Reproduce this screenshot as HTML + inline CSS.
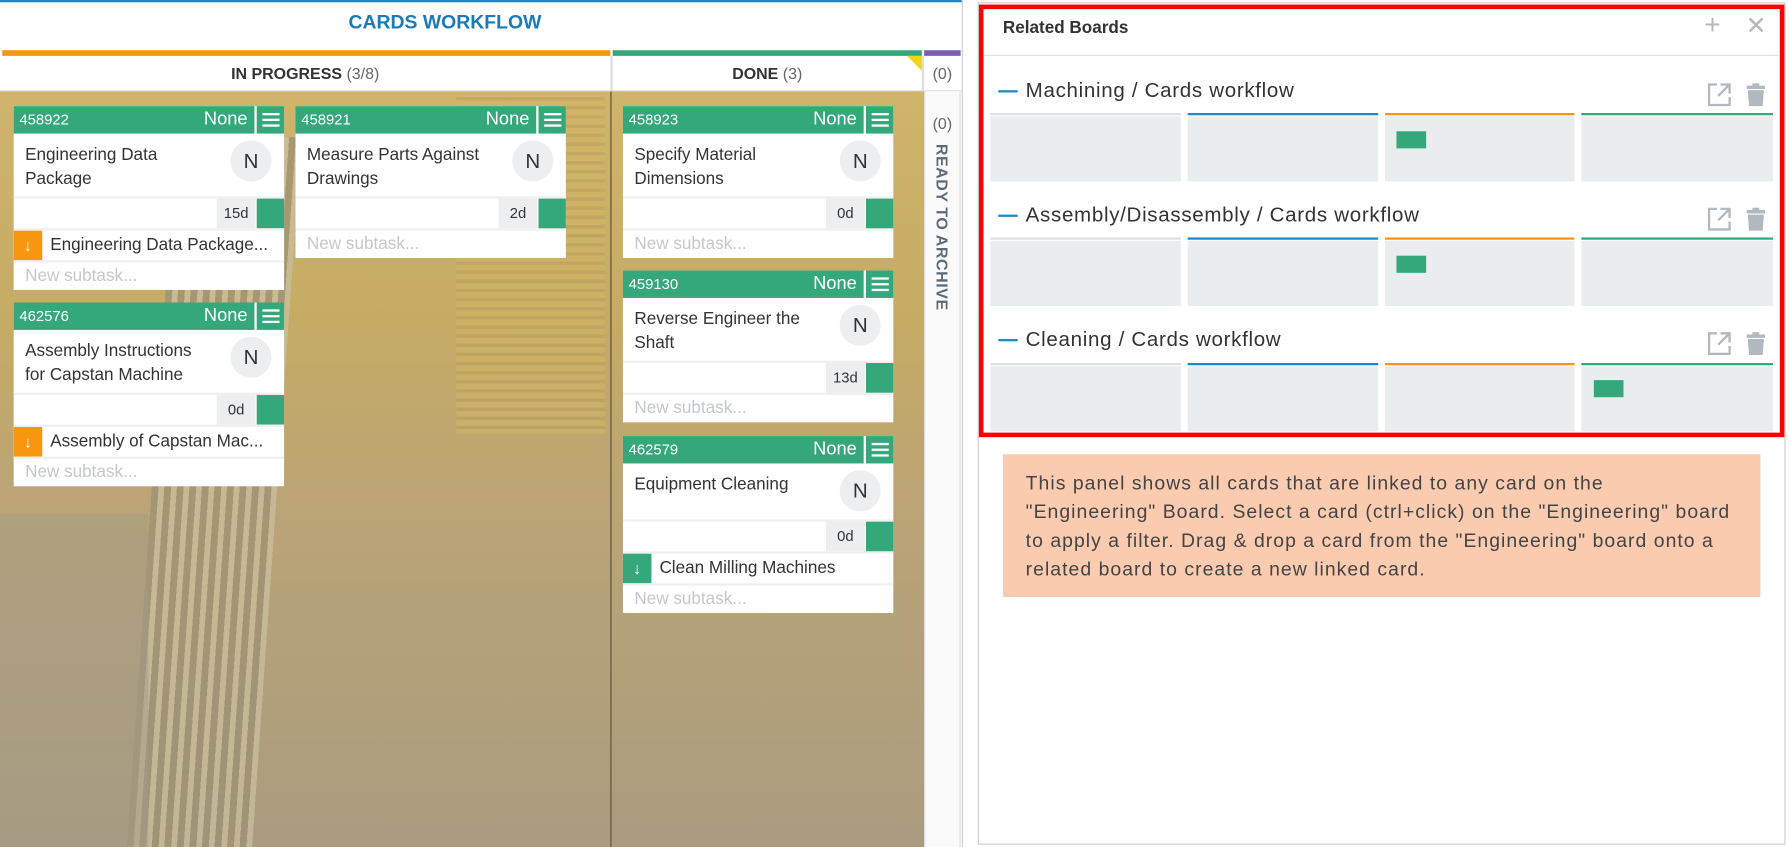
<!DOCTYPE html>
<html><head><meta charset="utf-8">
<style>
*{box-sizing:border-box;margin:0;padding:0}
html,body{width:1789px;height:847px;overflow:hidden;background:#fff;font-family:"Liberation Sans",sans-serif}
#w{position:absolute;left:0;top:0;width:1568px;height:742px;overflow:hidden;transform:scale(1.1409,1.1415);transform-origin:0 0}
.a{position:absolute}
.bg{left:0;top:80px;width:810px;height:662px;overflow:hidden;background:linear-gradient(180deg,#d0b46c 0%,#c6ab64 30%,#bba476 55%,#aa9c80 100%)}
.card{position:absolute;width:237px;background:#fff;font-size:15px;color:#333}
.hd{height:24px;background:#34a87a;color:#fff;position:relative}
.hd .id{position:absolute;left:5px;top:4px;font-size:13px}
.hd .no{position:absolute;right:32px;top:3px;font-size:16px}
.hd .mn{position:absolute;right:0;top:0;width:26px;height:24px;border-left:2px solid #fff}
.hd .mn i{position:absolute;left:5px;width:15px;height:2px;background:#fff}
.bd{position:relative;height:55px;padding:8px 60px 0 10px;line-height:21px}
.av{position:absolute;right:11px;top:6px;width:36px;height:36px;border-radius:50%;background:#eceef0;text-align:center;line-height:36px;font-size:18px;color:#333}
.ft{position:relative;height:28px;border-top:2px solid #f0f0f0}
.ft .d{position:absolute;right:25px;top:0;height:26px;width:34px;background:#eceef0;font-size:13px;text-align:center;line-height:26px}
.ft .g{position:absolute;right:0;top:0;width:24px;height:26px;background:#34a87a}
.sub{position:relative;height:28px;border-top:2px solid #f0f0f0;padding-left:32px;line-height:26px;white-space:nowrap;overflow:hidden}
.sub .ar{position:absolute;left:0;top:0;width:25px;height:26px;color:#fff;text-align:center;font-size:14px}
.ns{height:26px;border-top:2px solid #f0f0f0;padding-left:10px;line-height:24px;color:#c4c8cc}
.cell{position:absolute;height:57px;background:#e9edf0}
.top{position:absolute;height:2px}
.bt{position:absolute;left:875px;font-size:18px;color:#333;letter-spacing:.6px}
.bt b{display:inline-block;width:17px;height:2px;background:#1e88c8;vertical-align:middle;margin-right:7px;font-weight:normal}
</style></head><body><div id="w">
<div class="a" style="left:0;top:0;width:843px;height:2px;background:#1e88c8"></div>
<div class="a" style="left:0;top:10px;width:780px;text-align:center;font-size:17px;color:#1a7bb9;font-weight:bold">CARDS WORKFLOW</div>
<div class="a" style="left:2px;top:44px;width:533px;height:5px;background:#f7960f"></div>
<div class="a" style="left:537px;top:44px;width:271px;height:5px;background:#34a87a"></div>
<div class="a" style="left:810px;top:44px;width:32px;height:5px;background:#7b5fb3"></div>
<div class="a" style="left:0;top:49px;width:843px;height:31px;border-bottom:1px solid #ddd;background:#fff"></div>
<div class="a" style="left:0;top:56px;width:535px;text-align:center;font-size:14px;font-weight:bold;color:#333">IN PROGRESS <span style="font-weight:normal;color:#666">(3/8)</span></div>
<div class="a" style="left:537px;top:56px;width:271px;text-align:center;font-size:14px;font-weight:bold;color:#333">DONE <span style="font-weight:normal;color:#666">(3)</span></div>
<div class="a" style="left:795px;top:49px;width:0;height:0;border-top:13px solid #f3d21b;border-left:13px solid transparent"></div>
<div class="a" style="left:810px;top:56px;width:32px;text-align:center;font-size:14px;color:#666">(0)</div>
<div class="a" style="left:535px;top:49px;width:2px;height:31px;background:#ddd"></div>
<div class="a" style="left:808px;top:49px;width:2px;height:31px;background:#ddd"></div>
<div class="a bg">
 <div class="a" style="left:130px;top:40px;width:110px;height:700px;transform:skewX(-4deg);background:repeating-linear-gradient(90deg,#9c9274 0 6px,#c8bd9c 6px 11px);opacity:.8"></div>
 <div class="a" style="left:400px;top:0;width:130px;height:300px;background:repeating-linear-gradient(180deg,#d0b565 0 5px,#bba25c 5px 8px);opacity:.6"></div>
 <div class="a" style="left:0;top:370px;width:130px;height:300px;background:#a49c86;opacity:.5"></div>
 <div class="a" style="left:535px;top:0;width:1px;height:662px;background:#5a4f35"></div>
</div>
<div class="a" style="left:810px;top:80px;width:32px;height:662px;background:#fafafa;border-left:1px solid #ddd;border-right:1px solid #ddd"></div>
<div class="a" style="left:810px;top:100px;width:32px;text-align:center;font-size:14px;color:#666">(0)</div>
<div class="a" style="left:818px;top:126px;writing-mode:vertical-rl;font-size:14px;font-weight:bold;color:#5b6b7a;letter-spacing:.5px">READY TO ARCHIVE</div>

<div class="card" style="left:12px;top:93px"><div class="hd"><span class="id">458922</span><span class="no">None</span><span class="mn"><i style="top:6px"></i><i style="top:11px"></i><i style="top:16px"></i></span></div><div class="bd">Engineering Data Package<div class="av">N</div></div><div class="ft"><span class="d">15d</span><span class="g"></span></div><div class="sub"><span class="ar" style="background:#f7960f">↓</span>Engineering Data Package...</div><div class="ns">New subtask...</div></div>
<div class="card" style="left:259px;top:93px"><div class="hd"><span class="id">458921</span><span class="no">None</span><span class="mn"><i style="top:6px"></i><i style="top:11px"></i><i style="top:16px"></i></span></div><div class="bd">Measure Parts Against Drawings<div class="av">N</div></div><div class="ft"><span class="d">2d</span><span class="g"></span></div><div class="ns">New subtask...</div></div>
<div class="card" style="left:12px;top:265px"><div class="hd"><span class="id">462576</span><span class="no">None</span><span class="mn"><i style="top:6px"></i><i style="top:11px"></i><i style="top:16px"></i></span></div><div class="bd">Assembly Instructions for Capstan Machine<div class="av">N</div></div><div class="ft"><span class="d">0d</span><span class="g"></span></div><div class="sub"><span class="ar" style="background:#f7960f">↓</span>Assembly of Capstan Mac...</div><div class="ns">New subtask...</div></div>
<div class="card" style="left:546px;top:93px"><div class="hd"><span class="id">458923</span><span class="no">None</span><span class="mn"><i style="top:6px"></i><i style="top:11px"></i><i style="top:16px"></i></span></div><div class="bd">Specify Material Dimensions<div class="av">N</div></div><div class="ft"><span class="d">0d</span><span class="g"></span></div><div class="ns">New subtask...</div></div>
<div class="card" style="left:546px;top:237px"><div class="hd"><span class="id">459130</span><span class="no">None</span><span class="mn"><i style="top:6px"></i><i style="top:11px"></i><i style="top:16px"></i></span></div><div class="bd">Reverse Engineer the Shaft<div class="av">N</div></div><div class="ft"><span class="d">13d</span><span class="g"></span></div><div class="ns">New subtask...</div></div>
<div class="card" style="left:546px;top:382px"><div class="hd"><span class="id">462579</span><span class="no">None</span><span class="mn"><i style="top:6px"></i><i style="top:11px"></i><i style="top:16px"></i></span></div><div class="bd" style="height:49px">Equipment Cleaning<div class="av">N</div></div><div class="ft"><span class="d">0d</span><span class="g"></span></div><div class="sub"><span class="ar" style="background:#34a87a">↓</span>Clean Milling Machines</div><div class="ns">New subtask...</div></div>

<div class="a" style="left:843px;top:0;width:1px;height:742px;background:#ccc"></div>
<div class="a" style="left:857px;top:2px;width:708px;height:738px;border:1px solid #ccc"></div>
<div class="a" style="left:858px;top:4px;width:706px;height:379px;border:4px solid #f00"></div>
<div class="a" style="left:879px;top:16px;font-size:15px;font-weight:bold;color:#333">Related Boards</div>
<div class="a" style="left:1494px;top:9px;font-size:24px;color:#b0b8c0">+</div>
<div class="a" style="left:1530px;top:10px;font-size:22px;color:#b0b8c0">✕</div>
<div class="a" style="left:862px;top:48px;width:698px;height:1px;background:#dde2e6"></div>

<div class="bt" style="top:69px"><b></b>Machining / Cards workflow</div>
<div class="bt" style="top:178px"><b></b>Assembly/Disassembly / Cards workflow</div>
<div class="bt" style="top:287px"><b></b>Cleaning / Cards workflow</div>
<svg class="a" style="left:1496px;top:72px" width="22" height="240" viewBox="0 0 22 240"><g fill="none" stroke="#b0b8c0" stroke-width="2"><path d="M9 2H2v18h18v-7M12 2h8v8M20 2l-10 10"/><path d="M9 111H2v18h18v-7M12 111h8v8M20 111l-10 10"/><path d="M9 220H2v18h18v-7M12 220h8v8M20 220l-10 10"/></g></svg>
<svg class="a" style="left:1530px;top:72px" width="18" height="240" viewBox="0 0 18 240" fill="#b0b8c0"><path d="M1 3h16v3H1zM6 1h6v2H6zM2 7h14l-1 14H3z"/><path d="M1 112h16v3H1zM6 110h6v2H6zM2 116h14l-1 14H3z"/><path d="M1 221h16v3H1zM6 219h6v2H6zM2 225h14l-1 14H3z"/></svg>

<div class="top" style="left:868px;top:99px;width:167px;background:#dde2e6"></div><div class="top" style="left:1041px;top:99px;width:167px;background:#1e88c8"></div><div class="top" style="left:1214px;top:99px;width:166px;background:#f7960f"></div><div class="top" style="left:1386px;top:99px;width:168px;background:#34a87a"></div>
<div class="cell" style="left:868px;top:102px;width:167px"></div><div class="cell" style="left:1041px;top:102px;width:167px"></div><div class="cell" style="left:1214px;top:102px;width:166px"></div><div class="cell" style="left:1386px;top:102px;width:168px"></div>
<div class="a" style="left:1224px;top:115px;width:26px;height:15px;background:#34a87a"></div>
<div class="top" style="left:868px;top:208px;width:167px;background:#dde2e6"></div><div class="top" style="left:1041px;top:208px;width:167px;background:#1e88c8"></div><div class="top" style="left:1214px;top:208px;width:166px;background:#f7960f"></div><div class="top" style="left:1386px;top:208px;width:168px;background:#34a87a"></div>
<div class="cell" style="left:868px;top:211px;width:167px"></div><div class="cell" style="left:1041px;top:211px;width:167px"></div><div class="cell" style="left:1214px;top:211px;width:166px"></div><div class="cell" style="left:1386px;top:211px;width:168px"></div>
<div class="a" style="left:1224px;top:224px;width:26px;height:15px;background:#34a87a"></div>
<div class="top" style="left:868px;top:318px;width:167px;background:#dde2e6"></div><div class="top" style="left:1041px;top:318px;width:167px;background:#1e88c8"></div><div class="top" style="left:1214px;top:318px;width:166px;background:#f7960f"></div><div class="top" style="left:1386px;top:318px;width:168px;background:#34a87a"></div>
<div class="cell" style="left:868px;top:321px;width:167px"></div><div class="cell" style="left:1041px;top:321px;width:167px"></div><div class="cell" style="left:1214px;top:321px;width:166px"></div><div class="cell" style="left:1386px;top:321px;width:168px"></div>
<div class="a" style="left:1397px;top:333px;width:26px;height:15px;background:#34a87a"></div>

<div class="a" style="left:879px;top:398px;width:664px;height:125px;background:#fbcbb0;padding:13px 20px;font-size:17px;letter-spacing:.9px;line-height:25px;color:#444;white-space:nowrap;overflow:hidden">This panel shows all cards that are linked to any card on the<br>"Engineering" Board. Select a card (ctrl+click) on the "Engineering" board<br>to apply a filter. Drag &amp; drop a card from the "Engineering" board onto a<br>related board to create a new linked card.</div>
</div></body></html>
